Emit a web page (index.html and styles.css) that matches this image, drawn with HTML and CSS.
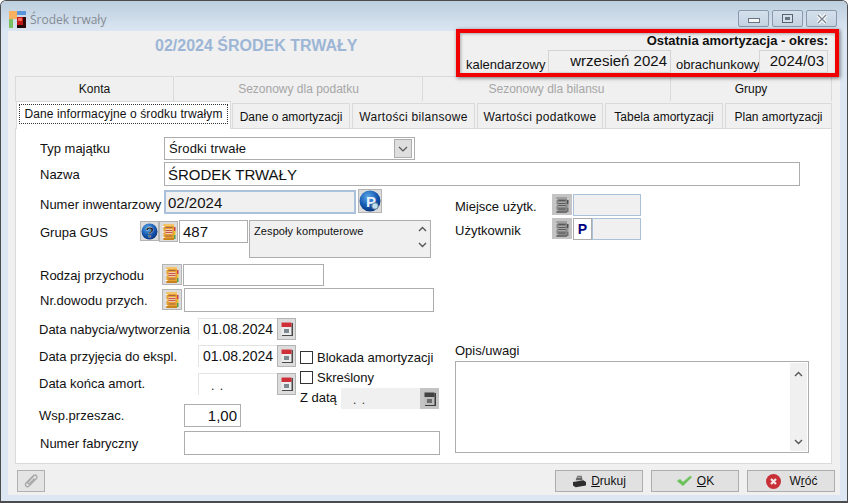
FILE: index.html
```html
<!DOCTYPE html>
<html lang="pl">
<head>
    <meta charset="UTF-8">
    <title>Środek trwały</title>
    <link rel="stylesheet" href="styles.css">
</head>
<body>
    <svg class="defs" width="0" height="0">
        <symbol id="book" viewBox="0 0 16 18">
            <rect x="2.5" y="1" width="10.5" height="16" rx="1" fill="#e6a233"/>
            <rect x="2.5" y="1" width="10.5" height="2" fill="#f4c468"/>
            <rect x="2.5" y="15" width="10.5" height="2" fill="#c98420"/>
            <rect x="4.5" y="4" width="7" height="1" fill="#a8604c"/>
            <rect x="4.5" y="6" width="7" height="5" fill="#f0cda8"/>
            <rect x="4.5" y="7" width="7" height="1" fill="#c8584c"/>
            <rect x="4.5" y="9" width="7" height="1" fill="#c8584c"/>
            <rect x="4.5" y="12.5" width="7" height="1" fill="#a8604c"/>
            <rect x="13" y="4" width="1.5" height="4" fill="#d04040"/>
            <rect x="13" y="8" width="1.5" height="4" fill="#e8c030"/>
            <rect x="13" y="12" width="1.5" height="4" fill="#50a050"/>
            <rect x="1.5" y="3" width="2" height="1" fill="#fff"/>
            <rect x="1.5" y="8.5" width="2" height="1" fill="#fff"/>
            <rect x="1.5" y="14" width="2" height="1" fill="#fff"/>
        </symbol>
        <symbol id="cal" viewBox="0 0 14 16">
            <rect x="2" y="2" width="11" height="13" fill="#4a4a4a"/>
            <rect x="1.5" y="1.5" width="10" height="12.5" fill="#ececec"/>
            <rect x="1.5" y="1.5" width="10" height="4.5" fill="#cf3038"/>
            <rect x="4" y="8" width="5" height="4" fill="#7c8a90"/>
        </symbol>
        <radialGradient id="orb" cx="0.4" cy="0.3" r="0.8">
            <stop offset="0" stop-color="#5aa8e8"/>
            <stop offset="0.55" stop-color="#1558b0"/>
            <stop offset="1" stop-color="#062a70"/>
        </radialGradient>
    </svg>

    <div class="window">
        <div class="titlebar">
            <svg class="app-icon" width="17" height="17" viewBox="0 0 17 17">
                <rect x="0" y="0" width="8" height="8" fill="#f6b060"/>
                <rect x="8" y="0" width="9" height="4" fill="#5a94d8"/>
                <rect x="0" y="8" width="4" height="9" fill="#78c060"/>
                <rect x="8" y="6" width="9" height="11" fill="#c01818"/>
                <rect x="8" y="14" width="9" height="3" fill="#200808"/>
                <rect x="14" y="6" width="3" height="11" fill="#300808"/>
                <rect x="9" y="7" width="4" height="3" fill="#f06a5a"/>
            </svg>
            <span class="win-title">Środek trwały</span>
            <div class="win-btns">
                <div class="win-btn"><span class="ic-min"></span></div>
                <div class="win-btn"><span class="ic-max"></span></div>
                <div class="win-btn">
                    <svg width="12" height="10" viewBox="0 0 12 10"><path d="M2 1 L10 9 M10 1 L2 9" stroke="#fff" stroke-width="3.6"/><path d="M2 1 L10 9 M10 1 L2 9" stroke="#7a8490" stroke-width="1.4"/></svg>
                </div>
            </div>
        </div>

        <div class="highlight">
            <div class="hl-title">Ostatnia amortyzacja - okres:</div>
            <div class="hl-row">
                <span class="hl-label hl-l1">kalendarzowy</span>
                <div class="hl-field hl-cal">wrzesień 2024</div>
                <span class="hl-label hl-l2">obrachunkowy</span>
                <div class="hl-field hl-obr">2024/03</div>
            </div>
        </div>

        <div class="client">
            <h1 class="doc-title">02/2024 ŚRODEK TRWAŁY</h1>

            <div class="tabs-top">
                <div class="tab-t t-konta">Konta</div>
                <div class="tab-t t-sez off">Sezonowy dla podatku</div>
                <div class="tab-t t-sez off">Sezonowy dla bilansu</div>
                <div class="tab-t t-grupy">Grupy</div>
            </div>
            <div class="tabs-bottom">
                <div class="tab active"><span class="focus">Dane informacyjne o środku trwałym</span></div>
                <div class="tab w-118">Dane o amortyzacji</div>
                <div class="tab w-123 wide">Wartości bilansowe</div>
                <div class="tab w-126 wide">Wartości podatkowe</div>
                <div class="tab w-119">Tabela amortyzacji</div>
                <div class="tab w-106">Plan amortyzacji</div>
            </div>

            <div class="panel">
                <div class="row r-typ">
                    <label class="lbl l-148">Typ majątku</label>
                    <div class="select">
                        <span>Środki trwałe</span>
                        <div class="select-btn">
                            <svg width="10" height="6" viewBox="0 0 10 6"><path d="M1 1 L5 5 L9 1" fill="none" stroke="#555" stroke-width="1.2"/></svg>
                        </div>
                    </div>
                </div>
                <div class="row r-nazwa">
                    <label class="lbl l-148">Nazwa</label>
                    <input class="fld big w-636" value="ŚRODEK TRWAŁY">
                </div>

                <div class="cols">
                    <div class="col-left">
                        <div class="row r-numer">
                            <label class="lbl l-148">Numer inwentarzowy</label>
                            <input class="fld big ro w-192" value="02/2024">
                            <div class="ibtn b-orb">
                                <svg width="22" height="22" viewBox="0 0 22 22">
                                    <circle cx="11" cy="11" r="10.5" fill="url(#orb)"/>
                                    <text x="7" y="16.5" class="orb-txt">P</text>
                                    <circle cx="16" cy="16" r="3.2" fill="#bfe0f0" stroke="#6a8aa0"/>
                                </svg>
                            </div>
                        </div>
                        <div class="row r-grupa">
                            <label class="lbl l-124">Grupa GUS</label>
                            <div class="ibtn b-help">
                                <svg width="17" height="17" viewBox="0 0 17 17">
                                    <circle cx="8.5" cy="8.5" r="8" fill="url(#orb)"/>
                                    <text x="4.5" y="13.5" class="orb-txt q">?</text>
                                </svg>
                            </div>
                            <div class="ibtn b-book b-gus"><svg width="16" height="18"><use href="#book"/></svg></div>
                            <input class="fld big w-68" value="487">
                            <div class="memo">
                                <span>Zespoły komputerowe</span>
                                <div class="memo-bar">
                                    <svg width="9" height="6" viewBox="0 0 9 6"><path d="M1 5 L4.5 1.5 L8 5" fill="none" stroke="#555" stroke-width="1.4"/></svg>
                                    <svg width="9" height="6" viewBox="0 0 9 6"><path d="M1 1 L4.5 4.5 L8 1" fill="none" stroke="#555" stroke-width="1.4"/></svg>
                                </div>
                            </div>
                        </div>
                        <div class="row r-rodzaj">
                            <label class="lbl l-146">Rodzaj przychodu</label>
                            <div class="ibtn b-book"><svg width="16" height="18"><use href="#book"/></svg></div>
                            <input class="fld w-141" value="">
                        </div>
                        <div class="row r-dowod">
                            <label class="lbl l-146">Nr.dowodu przych.</label>
                            <div class="ibtn b-book"><svg width="16" height="18"><use href="#book"/></svg></div>
                            <input class="fld w-250" value="">
                        </div>

                        <div class="dates">
                            <div class="dates-main">
                                <div class="row">
                                    <label class="lbl l-182">Data nabycia/wytworzenia</label>
                                    <div class="date">01.08.2024</div>
                                    <div class="ibtn b-cal"><svg width="14" height="16"><use href="#cal"/></svg></div>
                                </div>
                                <div class="row r-d2">
                                    <label class="lbl l-182">Data przyjęcia do ekspl.</label>
                                    <div class="date">01.08.2024</div>
                                    <div class="ibtn b-cal"><svg width="14" height="16"><use href="#cal"/></svg></div>
                                </div>
                                <div class="row r-d3">
                                    <label class="lbl l-182">Data końca amort.</label>
                                    <div class="date empty">. .</div>
                                    <div class="ibtn b-cal"><svg width="14" height="16"><use href="#cal"/></svg></div>
                                </div>
                                <div class="row r-wsp">
                                    <label class="lbl l-168">Wsp.przeszac.</label>
                                    <input class="fld big num w-57" value="1,00">
                                </div>
                            </div>
                            <div class="dates-side">
                                <div class="check"><span class="box"></span>Blokada amortyzacji</div>
                                <div class="check c2"><span class="box"></span>Skreślony</div>
                                <div class="row r-zdata">
                                    <label class="lbl l-41">Z datą</label>
                                    <div class="date empty off w-79">. .</div>
                                    <div class="ibtn b-cal dim"><svg width="14" height="16"><use href="#cal"/></svg></div>
                                </div>
                            </div>
                        </div>
                        <div class="row r-fabr">
                            <label class="lbl l-168">Numer fabryczny</label>
                            <input class="fld w-256" value="">
                        </div>
                    </div>

                    <div class="col-right">
                        <div class="row r-miejsce">
                            <label class="lbl l-97">Miejsce użytk.</label>
                            <div class="ibtn b-book dim"><svg width="16" height="18"><use href="#book"/></svg></div>
                            <div class="rofield w-67"></div>
                        </div>
                        <div class="row r-uzyt">
                            <label class="lbl l-97">Użytkownik</label>
                            <div class="ibtn b-book dim"><svg width="16" height="18"><use href="#book"/></svg></div>
                            <div class="p-btn">P</div>
                            <div class="rofield w-49"></div>
                        </div>
                        <div class="opis-lbl">Opis/uwagi</div>
                        <div class="opis">
                            <div class="opis-bar">
                                <svg width="9" height="6" viewBox="0 0 9 6"><path d="M1 5 L4.5 1.5 L8 5" fill="none" stroke="#555" stroke-width="1.4"/></svg>
                                <svg width="9" height="6" viewBox="0 0 9 6"><path d="M1 1 L4.5 4.5 L8 1" fill="none" stroke="#555" stroke-width="1.4"/></svg>
                            </div>
                        </div>
                    </div>
                </div>
            </div>

            <div class="footer">
                <div class="clip">
                    <svg width="18" height="18" viewBox="0 0 18 18"><path d="M12 3 L4 11 C2 13 5 16 7 14 L14.5 6.5 C16 5 14 2 12 3.5 L6 10 C5 11 6.5 12.5 7.5 11.5 L12.5 6.5" fill="none" stroke="#a8a8a8" stroke-width="1.3"/></svg>
                </div>
                <div class="btn">
                    <svg width="15" height="13" viewBox="0 0 17 15">
                        <path d="M6 1 L11 1 L12 6 L4 6 Z" fill="#666"/>
                        <path d="M1 8 L13 6 L16 8 L16 12 L4 14 L1 12 Z" fill="#2e2e2e"/>
                        <rect x="6" y="2" width="4" height="1" fill="#ccc"/>
                    </svg>
                    <span><u>D</u>rukuj</span>
                </div>
                <div class="btn">
                    <svg width="17" height="14" viewBox="0 0 17 14"><path d="M1 7 L4 5 L7 8 L14 2 L16 3 L7 12 Z" fill="#6cc05c" stroke="#98d08c" stroke-width="0.6"/></svg>
                    <span><u>O</u>K</span>
                </div>
                <div class="btn">
                    <svg width="17" height="17" viewBox="0 0 17 17">
                        <circle cx="8.5" cy="8.5" r="7.5" fill="#c83038"/>
                        <path d="M6 6 L11 11 M11 6 L6 11" stroke="#f4e8e8" stroke-width="2.2"/>
                    </svg>
                    <span class="wroc">W<u>r</u>óć</span>
                </div>
            </div>
        </div>
    </div>
</body>
</html>
```

FILE: styles.css
```css
*{
    margin: 0;
    padding: 0;
    box-sizing: border-box;
}
html, body{
    width: 848px;
    height: 503px;
    overflow: hidden;
    background: #fff;
}
body{
    font-family: "Liberation Sans", Arial, sans-serif;
    font-size: 12px;
    color: #111;
}
.defs{
    position: absolute;
}

/* window frame */
.window{
    position: relative;
    width: 848px;
    height: 503px;
    display: flex;
    flex-direction: column;
    border: 1px solid #4c4c4c;
    border-bottom-width: 2px;
    border-radius: 6px 6px 0 0;
    background: #dce7f3;
}
.titlebar{
    height: 30px;
    display: flex;
    align-items: flex-start;
    padding: 9px 0 0 8px;
    background: linear-gradient(#bccede, #dbe6f2);
    border-radius: 5px 5px 0 0;
    flex-shrink: 0;
}
.app-icon{
    margin-top: 1px;
}
.win-title{
    margin: 1px 0 0 4px;
    font-family: "Open Sans", sans-serif;
    font-size: 12px;
    color: #858c94;
}
.win-btns{
    margin-left: auto;
    margin-right: 10px;
    display: flex;
    gap: 3px;
}
.win-btn{
    width: 31px;
    height: 17px;
    display: flex;
    align-items: center;
    justify-content: center;
    border: 1px solid #8a9aaa;
    border-radius: 2px;
    background: linear-gradient(#d4e0ec, #c4d3e2);
}
.ic-min{
    width: 12px;
    height: 5px;
    margin-top: 4px;
    border: 1px solid #6a7480;
    background: #f4f6f8;
}
.ic-max{
    width: 11px;
    height: 9px;
    position: relative;
    border: 1px solid #5a6470;
    background: #d4e0ec;
}
.ic-max::after{
    content: "";
    position: absolute;
    left: 2px;
    top: 2px;
    width: 5px;
    height: 3px;
    background: #6a7480;
}

/* red frame over the header */
.highlight{
    position: absolute;
    left: 455px;
    top: 28px;
    width: 383px;
    height: 48px;
    padding: 0 2px 0 6px;
    border: 4px solid #f00000;
    box-shadow: 1px 1px 4px rgba(0, 0, 0, 0.55), inset 1px 1px 3px rgba(0, 0, 0, 0.3);
    z-index: 2;
}
.hl-title{
    font-weight: bold;
    font-size: 13px;
    text-align: right;
    line-height: 15px;
    padding-right: 5px;
}
.hl-row{
    display: flex;
    align-items: flex-end;
    margin-top: 2px;
}
.hl-label{
    flex-shrink: 0;
    font-size: 13px;
    line-height: 15px;
    padding-bottom: 1px;
}
.hl-l1{
    width: 82px;
}
.hl-l2{
    width: 88px;
    padding-left: 5px;
}
.hl-field{
    flex-shrink: 0;
    height: 23px;
    padding-right: 3px;
    border: 1px solid #d4d4d4;
    font-size: 15px;
    line-height: 20px;
    text-align: right;
    white-space: nowrap;
}
.hl-cal{
    width: 123px;
}
.hl-obr{
    width: 69px;
}

/* client area */
.client{
    width: 832px;
    height: 464px;
    margin-left: 7px;
    padding: 0 0 0 7px;
    background: #f0f0f0;
}
.doc-title{
    height: 45px;
    padding: 6px 0 0 140px;
    font-size: 16px;
    line-height: 18px;
    color: #9db6d6;
}
.tabs-top{
    display: flex;
    height: 25px;
}
.tab-t{
    display: flex;
    align-items: center;
    justify-content: center;
    border: 1px solid #dadada;
    border-bottom: none;
}
.t-konta{
    width: 159px;
    margin-right: 1px;
}
.t-sez{
    width: 248px;
    border-left: none;
}
.t-grupy{
    width: 161px;
    border-left: none;
}
.off{
    color: #a6a6a6;
}
.tabs-bottom{
    display: flex;
    height: 28px;
    padding-left: 1px;
    position: relative;
    z-index: 1;
    gap: 2px;
}
.tab{
    height: 25px;
    margin-top: 2px;
    padding-top: 1px;
    display: flex;
    align-items: center;
    justify-content: center;
    border: 1px solid #dadada;
    border-bottom: none;
}
.tab.wide{
    letter-spacing: 0.3px;
}
.tab.active{
    width: 215px;
    height: 28px;
    margin-top: 0;
    margin-right: -1px;
    background: #fff;
    align-items: flex-start;
    padding-top: 3px;
}
.focus{
    display: block;
    padding: 2px 4px;
    outline: 1px dotted #333;
    white-space: nowrap;
    letter-spacing: 0.12px;
}
.w-118{ width: 118px; }
.w-123{ width: 123px; }
.w-126{ width: 126px; }
.w-119{ width: 118px; }
.w-106{ width: 107px; }

.panel{
    width: 817px;
    height: 336px;
    margin-top: -1px;
    background: #fff;
    border: 1px solid #dadada;
}

/* form rows */
.row{
    display: flex;
    align-items: flex-start;
}
.lbl{
    display: block;
    flex-shrink: 0;
    font-size: 13px;
    line-height: 15px;
    white-space: nowrap;
}
.l-148{ width: 148px; padding-left: 24px; }
.l-124{ width: 124px; padding-left: 24px; padding-top: 5px; }
.l-146{ width: 146px; padding-left: 24px; padding-top: 4px; }
.l-182{ width: 182px; padding-left: 23px; padding-top: 4px; }
.l-168{ width: 168px; padding-left: 23px; padding-top: 4px; }
.l-97{ width: 97px; padding-top: 5px; }
.l-41{ width: 41px; padding-top: 2px; }

.fld{
    display: block;
    height: 24px;
    padding: 0 3px;
    border: 1px solid #adadad;
    outline: none;
    background: #fff;
    font-family: "Liberation Sans", Arial, sans-serif;
    font-size: 12px;
    color: #111;
}
.big{
    font-size: 15px;
}
.ro{
    background: #f0f0f0;
    border: 2px solid #a9c1da;
    padding: 0 2px;
}
.num{
    text-align: right;
}
.w-636{ width: 636px; }
.w-192{ width: 192px; margin-top: 1px; }
.w-68{ width: 69px; height: 23px; margin-left: 1px; }
.w-141{ width: 141px; height: 22px; margin-left: 1px; }
.w-250{ width: 250px; margin-left: 2px; }
.w-57{ width: 57px; height: 23px; }
.w-256{ width: 256px; }

.r-typ{
    margin-top: 8px;
    height: 23px;
}
.r-typ .lbl{
    padding-top: 4px;
}
.r-nazwa{
    margin-top: 2px;
    height: 24px;
}
.r-nazwa .lbl{
    padding-top: 5px;
}
.select{
    width: 251px;
    height: 23px;
    padding: 0 2px 0 4px;
    display: flex;
    align-items: center;
    justify-content: space-between;
    border: 1px solid #adadad;
}
.select span{
    font-size: 13px;
    letter-spacing: 0.15px;
}
.select-btn{
    width: 18px;
    height: 19px;
    display: flex;
    align-items: center;
    justify-content: center;
    border: 1px solid #adadad;
    background: #dedede;
}

.cols{
    display: flex;
}
.col-left{
    width: 424px;
}
.col-right{
    width: 354px;
    margin-left: 15px;
}

.ibtn{
    display: flex;
    align-items: center;
    justify-content: center;
    flex-shrink: 0;
    border: 1px solid #b4b4b4;
    background: #dcdcdc;
}
.b-orb{
    width: 24px;
    height: 24px;
    margin-left: 2px;
}
.b-help{
    width: 19px;
    height: 20px;
    margin-top: 1px;
}
.b-book{
    width: 20px;
    height: 21px;
}
.b-gus{
    width: 19px;
    margin-top: 1px;
}
.b-cal{
    width: 19px;
    height: 22px;
}
.dim svg{
    filter: grayscale(1) brightness(0.8);
}
.dim{
    background: #c4c4c4;
    border-color: #c4c4c4;
}
.orb-txt{
    font-size: 15px;
    font-weight: bold;
    fill: #e8f0fa;
    font-family: "Liberation Sans", sans-serif;
}
.orb-txt.q{
    font-size: 14px;
    fill: #111;
    stroke: #fff;
    stroke-width: 0.3px;
}

.r-numer{
    margin-top: 3px;
    height: 25px;
}
.r-numer .lbl{
    padding-top: 8px;
}
.r-grupa{
    margin-top: 6px;
    height: 38px;
}
.memo{
    width: 182px;
    height: 38px;
    margin-left: 1px;
    padding: 4px 0 0 4px;
    display: flex;
    justify-content: space-between;
    border: 1px solid #adadad;
    background: #f0f0f0;
    font-size: 11px;
    line-height: 13px;
}
.memo span{
    letter-spacing: 0.1px;
}
.memo-bar{
    width: 15px;
    margin-top: -2px;
    display: flex;
    flex-direction: column;
    align-items: center;
    gap: 10px;
    padding-top: 3px;
}
.r-rodzaj{
    margin-top: 6px;
    height: 22px;
}
.r-dowod{
    margin-top: 2px;
    height: 24px;
}
.r-dowod .lbl{
    padding-top: 5px;
}
.r-dowod .ibtn{
    margin-top: 1px;
}

.dates{
    display: flex;
    margin-top: 6px;
}
.dates-main{
    width: 280px;
}
.dates-side{
    width: 140px;
    margin-left: 4px;
    padding-top: 32px;
}
.date{
    width: 79px;
    height: 22px;
    padding: 2px 0 0 4px;
    border-left: 1px solid #e4e4e4;
    border-top: 1px solid #e4e4e4;
    font-size: 14px;
    line-height: 17px;
    white-space: nowrap;
}
.empty{
    padding-left: 12px;
    font-size: 12px;
    word-spacing: 2px;
    line-height: 20px;
}
.empty.off{
    width: 79px;
    height: 21px;
    color: #333;
    background: #f0f0f0;
    border: none;
}
.r-d2{
    margin-top: 5px;
}
.r-d3{
    margin-top: 6px;
}
.r-d3 .lbl{
    padding-top: 3px;
}
.r-wsp{
    margin-top: 9px;
}
.check{
    display: flex;
    align-items: center;
    height: 14px;
    font-size: 13px;
    white-space: nowrap;
}
.check.c2{
    margin-top: 6px;
}
.box{
    width: 13px;
    height: 13px;
    margin-right: 4px;
    border: 1px solid #333;
    background: #fff;
}
.r-zdata{
    margin-top: 4px;
}
.r-zdata .b-cal{
    height: 21px;
}
.r-fabr{
    margin-top: 4px;
}
.r-fabr .lbl{
    padding-left: 24px;
    padding-top: 5px;
}

.r-miejsce{
    margin-top: 8px;
    height: 22px;
}
.r-uzyt{
    margin-top: 2px;
    height: 22px;
}
.rofield{
    height: 22px;
    border: 1px solid #a9c1da;
    background: #f0f0f0;
}
.w-67{ width: 68px; margin-left: 1px; }
.w-49{ width: 49px; }
.p-btn{
    width: 19px;
    height: 22px;
    margin-left: 1px;
    border: 1px solid #adadad;
    background: #fff;
    color: #000080;
    font-weight: bold;
    font-size: 14px;
    line-height: 20px;
    text-align: center;
}
.opis-lbl{
    margin-top: 103px;
    height: 15px;
    font-size: 13px;
    line-height: 15px;
}
.opis{
    width: 354px;
    height: 92px;
    margin-top: 3px;
    padding: 1px;
    display: flex;
    justify-content: flex-end;
    border: 1px solid #adadad;
}
.opis-bar{
    width: 17px;
    padding: 8px 0 6px;
    display: flex;
    flex-direction: column;
    align-items: center;
    justify-content: space-between;
    background: #f0f0f0;
}

/* bottom buttons */
.footer{
    height: 31px;
    display: flex;
    gap: 8px;
    padding-top: 6px;
}
.clip{
    width: 28px;
    height: 22px;
    margin-left: 2px;
    margin-right: 502px;
    display: flex;
    align-items: center;
    justify-content: center;
    border: 1px solid #b0b0b0;
    background: #e4e4e4;
}
.btn{
    width: 88px;
    height: 22px;
    display: flex;
    align-items: center;
    justify-content: center;
    gap: 4px;
    border: 1px solid #adadad;
    background: #e1e1e1;
}
.wroc{
    margin-left: 4px;
}
```
